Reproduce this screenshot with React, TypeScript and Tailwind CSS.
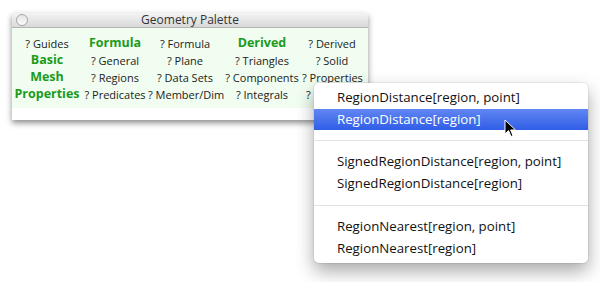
import React from 'react'

const font = { fontFamily: '"Lucida Grande", "Open Sans", "DejaVu Sans", sans-serif' }

type Cell = { text: string; head?: boolean }

const rows: Cell[][] = [
  [{ text: '? Guides' }, { text: 'Formula', head: true }, { text: '? Formula' }, { text: 'Derived', head: true }, { text: '? Derived' }],
  [{ text: 'Basic', head: true }, { text: '? General' }, { text: '? Plane' }, { text: '? Triangles' }, { text: '? Solid' }],
  [{ text: 'Mesh', head: true }, { text: '? Regions' }, { text: '? Data Sets' }, { text: '? Components' }, { text: '? Properties' }],
  [{ text: 'Properties', head: true }, { text: '? Predicates' }, { text: '? Member/Dim' }, { text: '? Integrals' }, { text: '? Distance' }],
]

const menu: (string | null)[] = [
  'RegionDistance[region, point]',
  'RegionDistance[region]',
  null,
  'SignedRegionDistance[region, point]',
  'SignedRegionDistance[region]',
  null,
  'RegionNearest[region, point]',
  'RegionNearest[region]',
]

export default function App() {
  return (
    <div className="relative w-[600px] h-[282px] bg-white overflow-hidden" style={font}>
      {/* palette window */}
      <div className="ml-[12px] mt-[13px] w-[356px] bg-white shadow-[0_3px_6px_rgba(0,0,0,0.45)]">
        <div className="relative h-[15px] bg-gradient-to-b from-[#f4f4f4] to-[#d9d9d9] border-b border-[#b5b5b5] flex items-center justify-center">
          <div className="absolute left-[4px] top-[1px] w-[12px] h-[12px] rounded-full border border-[#a8a8a8] bg-gradient-to-b from-[#e6e6e6] to-[#fafafa]" />
          <span className="text-[12px] leading-none text-[#333]">Geometry Palette</span>
        </div>
        <div className="bg-[#f0fdf0] pt-[7px] pb-[5px]">
          {rows.map((row, i) => (
            <div key={i} className="grid grid-cols-[70px_66px_74px_80px_60px] h-[17px] items-center">
              {row.map((c, j) =>
                c.head ? (
                  <div key={j} className="text-center text-[12.5px] font-bold text-[#1c9a1c] leading-none whitespace-nowrap">
                    {c.text}
                  </div>
                ) : (
                  <div key={j} className="text-center text-[11px] text-[#222] leading-none whitespace-nowrap">
                    {c.text}
                  </div>
                ),
              )}
            </div>
          ))}
        </div>
        <div className="h-[12px]" />
      </div>

      {/* popup menu */}
      <div className="absolute left-[314px] top-[83px] w-[274px] rounded-[5px] bg-white pt-[4px] pb-[3px] shadow-[0_8px_18px_rgba(0,0,0,0.35),0_0_0_1px_rgba(0,0,0,0.06)]">
        {menu.map((m, i) =>
          m === null ? (
            <div key={i} className="h-[21px] flex items-center">
              <div className="w-full h-px bg-[#e2e2e2]" />
            </div>
          ) : i === 1 ? (
            <div key={i} className="h-[21px] flex items-center pl-[23px] text-[13.25px] text-white bg-gradient-to-b from-[#6286f2] to-[#2f5de6]">
              {m}
            </div>
          ) : (
            <div key={i} className="h-[22px] flex items-center pl-[23px] text-[13.25px] text-[#111]">
              {m}
            </div>
          ),
        )}
      </div>

      {/* cursor */}
      <svg className="absolute left-[504px] top-[119px]" width="13" height="20" viewBox="0 0 13 20">
        <path d="M1 1 L1 15 L4.5 11.5 L7 17.5 L9 16.6 L6.6 11 L11.5 11 Z" fill="#000" stroke="#fff" strokeWidth="1" strokeLinejoin="round" />
      </svg>
    </div>
  )
}
